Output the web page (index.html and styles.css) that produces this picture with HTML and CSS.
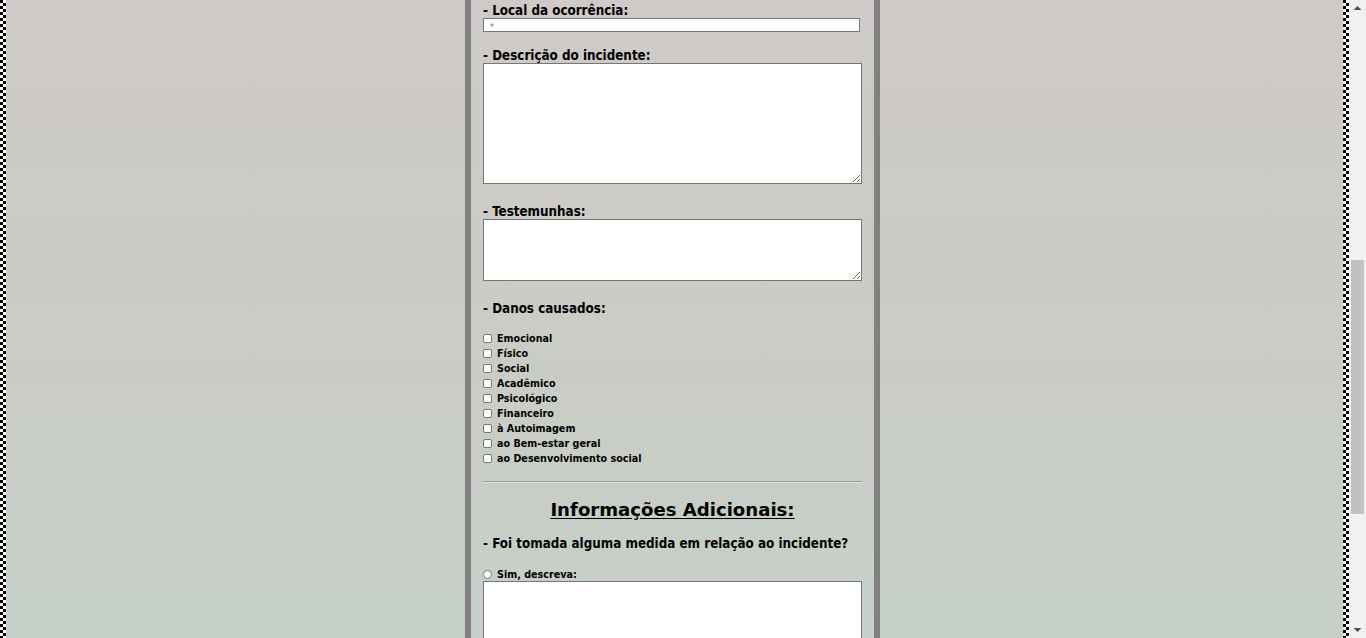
FILE: index.html
```html
<!DOCTYPE html>
<html lang="pt-BR">
<head>
<meta charset="utf-8">
<title>Relato de incidente</title>
<link rel="stylesheet" href="styles.css">
</head>
<body>
<div class="viewport">
  <div class="page">
    <div class="checker"></div>
    <div class="center">
      <div class="panel">
        <form class="form">
          <label class="lbl lbl-local" for="local">- Local da ocorrência:</label>
          <input class="text-in" id="local" type="text" placeholder="*">

          <label class="lbl lbl-desc" for="desc">- Descrição do incidente:</label>
          <textarea class="area area-desc" id="desc"></textarea>

          <label class="lbl lbl-test" for="test">- Testemunhas:</label>
          <textarea class="area area-test" id="test"></textarea>

          <div class="lbl lbl-danos">- Danos causados:</div>
          <div class="checks">
            <label class="opt"><input class="box" type="checkbox"><span>Emocional</span></label>
            <label class="opt"><input class="box" type="checkbox"><span>Físico</span></label>
            <label class="opt"><input class="box" type="checkbox"><span>Social</span></label>
            <label class="opt"><input class="box" type="checkbox"><span>Acadêmico</span></label>
            <label class="opt"><input class="box" type="checkbox"><span>Psicológico</span></label>
            <label class="opt"><input class="box" type="checkbox"><span>Financeiro</span></label>
            <label class="opt"><input class="box" type="checkbox"><span>à Autoimagem</span></label>
            <label class="opt"><input class="box" type="checkbox"><span>ao Bem-estar geral</span></label>
            <label class="opt"><input class="box" type="checkbox"><span>ao Desenvolvimento social</span></label>
          </div>

          <hr class="rule">

          <h2 class="section-title">Informações Adicionais:</h2>

          <div class="lbl lbl-foi">- Foi tomada alguma medida em relação ao incidente?</div>
          <label class="opt opt-radio"><input class="radio" type="radio" name="medida"><span>Sim, descreva:</span></label>
          <textarea class="area area-sim"></textarea>
        </form>
      </div>
    </div>
    <div class="checker"></div>
  </div>
  <div class="scrollbar">
    <div class="sb-btn">
      <svg width="17" height="17" viewBox="0 0 17 17"><polygon points="4.5,10 8.5,6 12.5,10" fill="#505050"/></svg>
    </div>
    <div class="sb-track"><div class="sb-thumb"></div></div>
    <div class="sb-btn">
      <svg width="17" height="17" viewBox="0 0 17 17"><polygon points="4.5,7 12.5,7 8.5,11" fill="#505050"/></svg>
    </div>
  </div>
</div>
</body>
</html>
```

FILE: styles.css
```css
* { box-sizing: border-box; }

html, body {
  margin: 0;
  padding: 0;
  height: 638px;
  overflow: hidden;
}

body {
  font-family: "DejaVu Sans Condensed", "DejaVu Sans", sans-serif;
  color: #000;
}

.viewport {
  display: flex;
  width: 1366px;
  height: 638px;
}

.page {
  flex: 0 0 1349px;
  display: flex;
  height: 638px;
  background: linear-gradient(#cfcac7 0%, #cbcbc5 40%, #c6d0c8 100%);
}

.checker {
  flex: 0 0 6px;
  background: repeating-conic-gradient(#fff 0 25%, #000 0 50%) 0 0 / 6px 6px;
}

.center {
  flex: 1;
  overflow: hidden;
}

.panel {
  margin-left: 459px;
  width: 415px;
  height: 638px;
  border-left: 6px solid #818181;
  border-right: 6px solid #818181;
  padding: 0 12px;
}

.form {
  display: flex;
  flex-direction: column;
  align-items: flex-start;
  padding-top: 2px;
}

.lbl {
  display: block;
  font-weight: bold;
  font-size: 13.3px;
  line-height: 14px;
  padding-top: 2px;
  white-space: nowrap;
}

.lbl-desc { margin-top: 15px; }
.lbl-test { margin-top: 19px; }
.lbl-danos { margin-top: 19px; }
.lbl-foi { margin-top: 14px; }

.text-in {
  width: 377px;
  height: 14px;
  margin: 0;
  padding: 4px 6px 0 6px;
  border: 1px solid #767676;
  background: #fff;
  font-family: "DejaVu Sans", sans-serif;
  font-size: 8px;
  line-height: 8px;
}

.text-in::placeholder {
  color: #6f6f6f;
}

.area {
  width: 379px;
  margin: 0;
  padding: 2px;
  border: 1px solid #767676;
  background: #fff;
  font-family: "Liberation Mono", monospace;
  font-size: 13px;
  display: block;
}

.area-desc { height: 121px; }
.area-test { height: 62px; }
.area-sim { height: 121px; }

.checks {
  margin-top: 15px;
  display: flex;
  flex-direction: column;
}

.opt {
  display: flex;
  align-items: center;
  height: 15px;
  gap: 4px;
  font-family: "DejaVu Sans", sans-serif;
  font-weight: bold;
  font-size: 9.6px;
  line-height: 15px;
  white-space: nowrap;
}

.opt-radio {
  margin-top: 16px;
  height: 14px;
  line-height: 14px;
  padding-top: 1px;
}

.box, .radio {
  -webkit-appearance: none;
  appearance: none;
  width: 9px;
  height: 9px;
  margin: -1px 1px 0 0;
  border: 1px solid #767676;
  background: #fff;
  flex: 0 0 9px;
}

.box { border-radius: 2px; }
.radio { border-radius: 50%; }

.rule {
  width: 379px;
  margin: 15px 0 0 0;
  height: 0;
  border: 0;
  border-top: 1px solid #9c9c9c;
  border-bottom: 1px solid #e2e2e2;
}

.section-title {
  align-self: stretch;
  margin: 16px 0 0 0;
  text-align: center;
  font-family: "DejaVu Sans", sans-serif;
  font-size: 18.1px;
  line-height: 22px;
  font-weight: bold;
  text-decoration: underline;
  text-underline-offset: 2px;
}

.scrollbar {
  flex: 0 0 17px;
  display: flex;
  flex-direction: column;
  background: #f1f1f1;
  height: 638px;
}

.sb-btn {
  flex: 0 0 17px;
  height: 17px;
}

.sb-btn svg { display: block; }

.sb-track {
  flex: 1;
  padding: 243px 2px 0 2px;
}

.sb-thumb {
  height: 254px;
  background: #c1c1c1;
}
```
